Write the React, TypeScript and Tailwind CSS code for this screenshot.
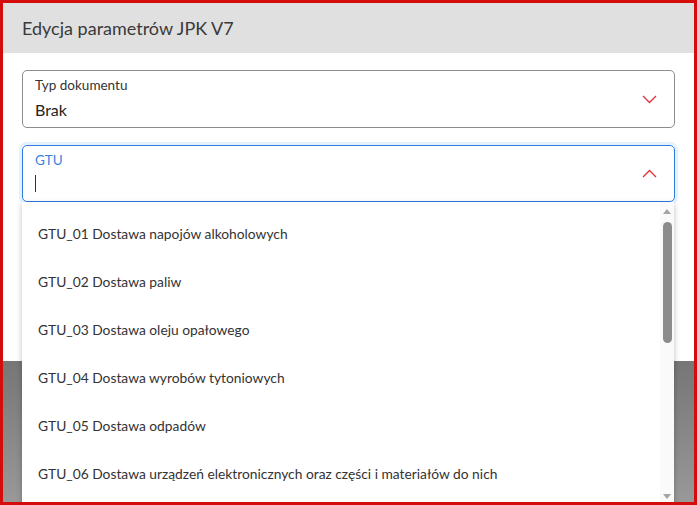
import { useState } from "react";

const items = [
  "GTU_01 Dostawa napojów alkoholowych",
  "GTU_02 Dostawa paliw",
  "GTU_03 Dostawa oleju opałowego",
  "GTU_04 Dostawa wyrobów tytoniowych",
  "GTU_05 Dostawa odpadów",
  "GTU_06 Dostawa urządzeń elektronicznych oraz części i materiałów do nich",
];

function Chevron({ up }: { up?: boolean }) {
  return (
    <svg width="15" height="9" viewBox="0 0 15 9" className="text-[#e0303c]">
      <path
        d={up ? "M1 8 L7.5 1.5 L14 8" : "M1 1 L7.5 7.5 L14 1"}
        fill="none"
        stroke="currentColor"
        strokeWidth="1.3"
      />
    </svg>
  );
}

export default function App() {
  const [value] = useState("Brak");

  return (
    <div
      className="w-[697px] h-[505px] border-[3px] border-[#d40c0c] relative overflow-hidden flex flex-col text-[#333]"
      style={{ fontFamily: "Lato, 'Noto Sans', sans-serif" }}
    >
      <div className="h-[50px] shrink-0 bg-[#e0e0e0] flex items-center px-[19px] text-[18px] text-[#3a3a3a]">
        Edycja parametrów JPK V7
      </div>

      <div className="bg-white h-[308px] shrink-0 px-[19px] pt-[17px] flex flex-col gap-[17px]">
        <div className="h-[58px] rounded-[5px] border border-[#8c8c8c] flex items-center pl-[12px] pr-[17px]">
          <div className="flex-1 flex flex-col">
            <span className="text-[13.5px] leading-[16px] text-[#333] -mt-[2px]">Typ dokumentu</span>
            <span className="text-[16px] leading-[19px] mt-[7px] text-[#222]">{value}</span>
          </div>
          <Chevron />
        </div>

        <div className="h-[57px] rounded-[5px] border border-[#2f7be0] ring-[3px] ring-[#e5f1fd] flex items-center pl-[12px] pr-[17px]">
          <div className="flex-1 flex flex-col -mt-[3px]">
            <span className="text-[13.5px] leading-[16px] text-[#3b82e0]">GTU</span>
            <span className="mt-[7px] h-[17px] w-px bg-[#333]" />
          </div>
          <Chevron up />
        </div>
      </div>

      <div className="flex-1 bg-gradient-to-b from-[#767676] to-[#999]" />

      <div className="absolute left-[19px] top-[199px] w-[652px] h-[310px] bg-white shadow-[0_2px_6px_rgba(0,0,0,0.25)] flex">
        <div className="flex-1 flex flex-col pt-[8px]">
          {items.map((t) => (
            <div key={t} className="h-[48px] shrink-0 flex items-center pl-[16px] text-[13.8px] text-[#333]">
              {t}
            </div>
          ))}
        </div>
        <div className="w-[14px] bg-[#fafafa] relative">
          <div className="absolute left-[3px] top-[7px] w-0 h-0 border-l-[4px] border-r-[4px] border-b-[5px] border-l-transparent border-r-transparent border-b-[#a3a3a3]" />
          <div className="absolute left-[3px] top-[20px] w-[9px] h-[121px] rounded-full bg-[#8c8c8c]" />
          <div className="absolute left-[3px] top-[292px] w-0 h-0 border-l-[4px] border-r-[4px] border-t-[5px] border-l-transparent border-r-transparent border-t-[#a3a3a3]" />
        </div>
      </div>
    </div>
  );
}
